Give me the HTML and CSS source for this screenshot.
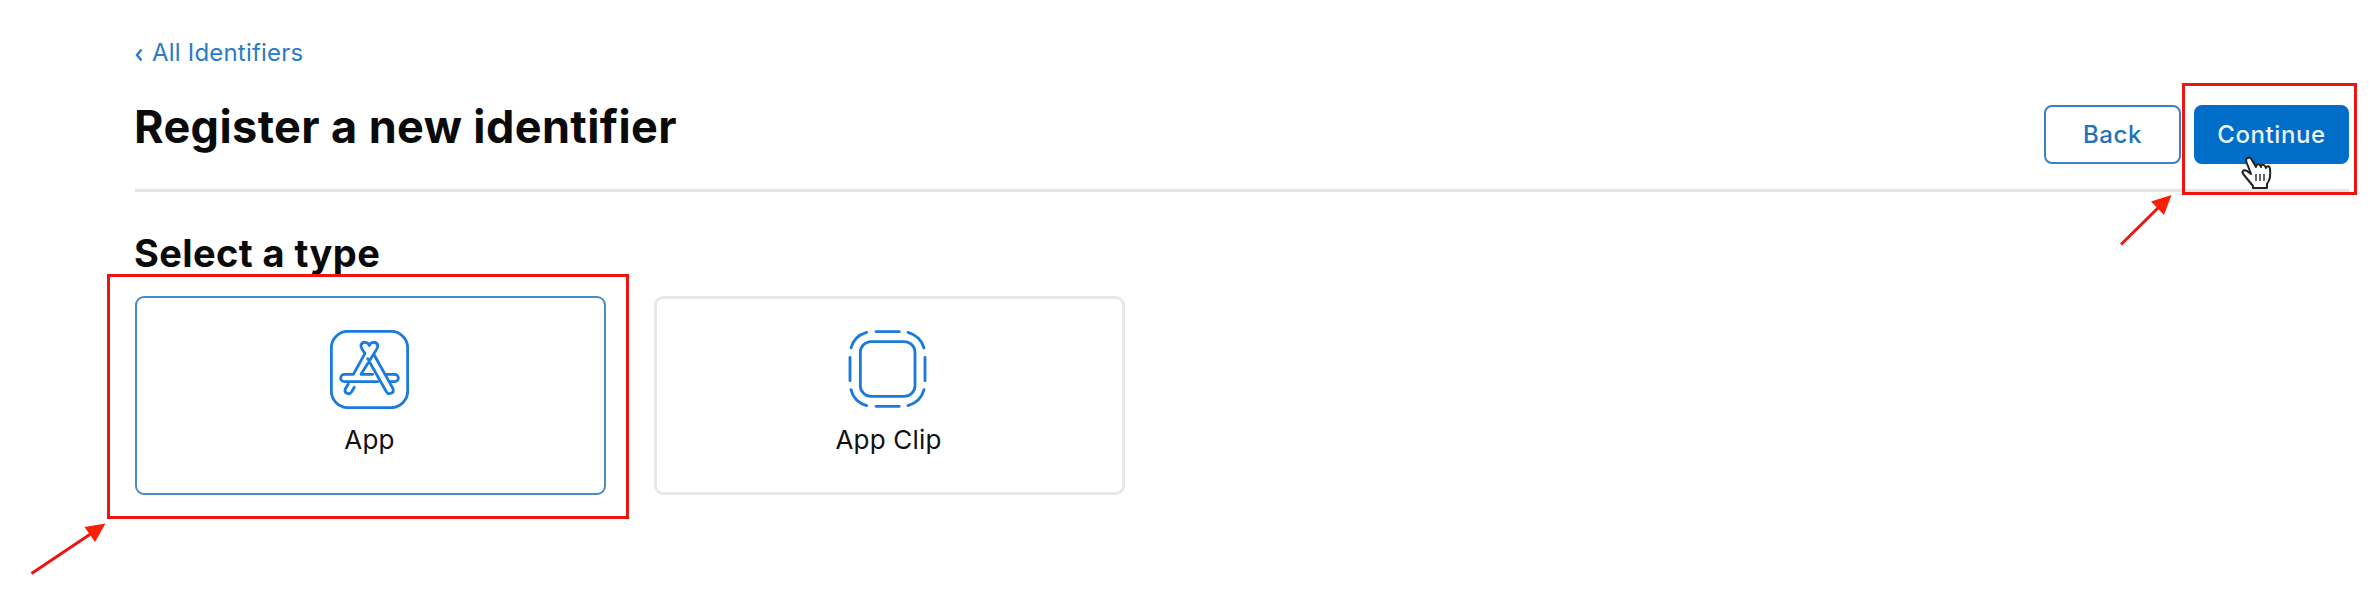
FILE: index.html
```html
<!DOCTYPE html>
<html lang="en">
<head>
<meta charset="utf-8">
<title>Register a new identifier</title>
<link rel="stylesheet" href="styles.css">
</head>
<body>
<main class="page">
  <a class="back-link"><svg class="chevron" viewBox="0 0 8 14"><path d="M6.500 1.500 2 7l4.500 5.500"/></svg><span class="back-text">All Identifiers</span></a>
  <header class="header">
    <h1 class="title">Register a new identifier</h1>
    <div class="actions">
      <button class="btn">Back</button>
      <button class="btn primary">Continue</button>
    </div>
  </header>
  <h2 class="subtitle">Select a type</h2>
  <section class="cards">
    <article class="card selected">
      <svg class="icon" viewBox="90 57 237 237">
        <rect x="94" y="61" width="229" height="229" rx="50"/>
        <path d="M208 103C203 91 187 91 183 102C181 109 185 113 195 127L160 190H133a11 11 0 0 0 0 22H233M208 103C213 91 229 91 233 102C235 109 231 113 221 129L183 190H218M221 129 279 233C284 247 266 253 259 242L203 143M257 190H284a11 11 0 0 1 0 22H268M145 219 136 233C131 246 147 254 155 242L163 229"/>
      </svg>
      <span class="label">App</span>
    </article>
    <article class="card">
      <svg class="icon clip" viewBox="82 57 237 237">
        <rect x="119" y="92" width="164" height="164" rx="32"/>
        <path d="M166 62H236M166 286H236M88 139V209M313 139V209M91 111Q100 75 138 64M262 64Q300 75 310 111M91 236Q100 273 138 284M262 284Q300 273 310 236"/>
      </svg>
      <span class="label">App Clip</span>
    </article>
  </section>
</main>
<div class="mark mark-continue"></div>
<div class="mark mark-app"></div>
<svg class="overlay" viewBox="0 0 2372 592">
  <path class="shaft" d="M31.500 573.500 92 533M2121 244.500 2159 207"/>
  <path class="head" d="M105.500 523.500 84.500 527 95 542ZM2171.500 195 2151 201.500 2164 215Z"/>
  <path class="hand" d="M2248 158C2245 158 2246 162 2248 166L2251 174 2247 171C2243 169 2241 172 2244 175L2253 186V188H2267V184C2270 180 2271 176 2270 169C2270 166 2267 165 2266 168C2265 164 2261 164 2261 167C2260 163 2256 164 2256 167L2252 160C2251 158 2249 157 2248 158Z"/>
  <path class="knuckles" d="M2256 174V181M2260 174V181M2264 174V181"/>
</svg>
</body>
</html>
```
FILE: styles.css
```css
* { box-sizing: border-box; }
body { margin: 0; width: 2372px; height: 592px; overflow: hidden; background: #fff; color: #0a0a0a; font-family: Inter, "Liberation Sans", sans-serif; }
.page { padding: 37px 23px 0 135px; }
.back-link { display: flex; align-items: center; height: 32px; color: #2a7cc4; font-size: 24px; line-height: 32px; letter-spacing: 0.2px; }
.chevron { width: 8px; height: 14px; margin: 3px 9px 0 0; fill: none; stroke: #2a7cc4; stroke-width: 2.4; }
.header { display: flex; justify-content: space-between; align-items: flex-start; height: 123px; padding-top: 36px; border-bottom: 3px solid #e4e4e4; }
.title { margin: -6px 0 0 -1px; font-size: 45px; line-height: 56px; font-weight: 650; letter-spacing: 0.4px; white-space: nowrap; }
.actions { display: flex; gap: 13px; }
.btn { width: 137px; height: 59px; padding: 0; border: 2px solid #3c82c0; border-radius: 8px; background: #fff; color: #2372b6; font: 500 24px Inter, sans-serif; letter-spacing: 0.6px; }
.btn.primary { width: 155px; border-color: #006dc8; background: #006dc8; color: #e9f4ff; }
.subtitle { margin: 37px 0 0 -1px; height: 67px; font-size: 38px; line-height: 48px; font-weight: 650; letter-spacing: 0.4px; }
.cards { display: flex; gap: 48px; }
.card { display: flex; flex-direction: column; align-items: center; width: 471px; height: 199px; padding: 31px 2px 0 0; border: 3px solid #e8e8e8; border-radius: 9px; font-size: 26px; color: #111; }
.card.selected { border: 2px solid #4a8bc2; padding-top: 32px; }
.icon { width: 79px; height: 79px; fill: none; stroke: #1b7bdd; stroke-width: 8.5; stroke-linecap: round; stroke-linejoin: round; }
.icon.clip { margin-right: 3px; }
.label { margin-top: 14px; line-height: 34px; letter-spacing: 0.2px; }
.mark { position: absolute; border: 3px solid #ee1510; }
.mark-continue { left: 2182px; top: 83px; width: 175px; height: 112px; }
.mark-app { left: 107px; top: 274px; width: 522px; height: 245px; }
.overlay { position: absolute; left: 0; top: 0; width: 2372px; height: 592px; }
.shaft { fill: none; stroke: #ee1510; stroke-width: 3; }
.head { fill: #fa2008; }
.hand { fill: #fff; stroke: #222; stroke-width: 2; stroke-linejoin: round; }
.knuckles { fill: none; stroke: #333; stroke-width: 1.5; }
```
